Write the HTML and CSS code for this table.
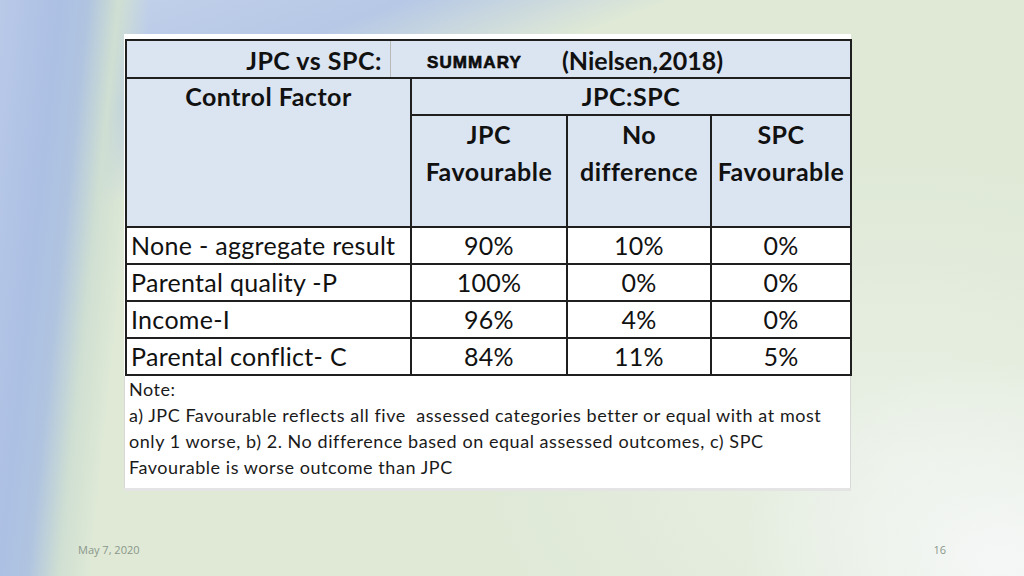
FILE: index.html
```html
<!DOCTYPE html>
<html>
<head>
<meta charset="utf-8">
<link rel="stylesheet" href="styles.css">
</head>
<body>
<div class="slide">
  <div class="sheet">
    <table class="grid">
      <colgroup>
        <col class="c1"><col class="c2"><col class="c3"><col class="c4">
      </colgroup>
      <tr class="r-title">
        <td colspan="4" class="hd title-cell">
          <div class="title">
            <span class="t-left">JPC vs SPC:</span>
            <span class="t-summary">SUMMARY</span>
            <span class="t-ref">(Nielsen,2018)</span>
          </div>
        </td>
      </tr>
      <tr class="r-h1">
        <td rowspan="2" class="hd top">Control Factor</td>
        <td colspan="3" class="hd">JPC:SPC</td>
      </tr>
      <tr class="r-h2">
        <td class="hd top two">JPC<br>Favourable</td>
        <td class="hd top two">No<br>difference</td>
        <td class="hd top two">SPC<br>Favourable</td>
      </tr>
      <tr class="r-d"><td class="lbl">None - aggregate result</td><td>90%</td><td>10%</td><td>0%</td></tr>
      <tr class="r-d"><td class="lbl">Parental quality -P</td><td>100%</td><td>0%</td><td>0%</td></tr>
      <tr class="r-d"><td class="lbl">Income-I</td><td>96%</td><td>4%</td><td>0%</td></tr>
      <tr class="r-d"><td class="lbl">Parental conflict- C</td><td>84%</td><td>11%</td><td>5%</td></tr>
    </table>
    <div class="note">
      <p>Note:</p>
      <p>a) JPC Favourable reflects all five&nbsp; assessed categories better or equal with at most</p>
      <p>only 1 worse, b) 2. No difference based on equal assessed outcomes, c) SPC</p>
      <p>Favourable is worse outcome than JPC</p>
    </div>
    <div class="sheet-foot"></div>
  </div>
  <div class="footer">
    <span>May 7, 2020</span>
    <span>16</span>
  </div>
</div>
</body>
</html>
```

FILE: styles.css
```css
html, body {
  margin: 0;
  padding: 0;
}
body {
  width: 1024px;
  height: 576px;
  overflow: hidden;
}
.slide {
  width: 1024px;
  height: 576px;
  box-sizing: border-box;
  padding-top: 34px;
  display: flex;
  flex-direction: column;
  background-color: #dfe9d6;
  background-image:
    radial-gradient(ellipse 260px 200px at 1000px 560px, rgba(246,248,248,0.95), rgba(246,248,248,0) 100%),
    radial-gradient(ellipse 420px 300px at 900px 460px, rgba(236,242,234,0.8), rgba(236,242,234,0) 100%),
    linear-gradient(96deg, #b9c9e8 0px, #acc0e4 60px, #b0c4e0 88px, #cfdfd2 118px, rgba(220,232,212,0) 150px),
    linear-gradient(160deg, #c6d4ec 0px, #b6c8e6 140px, rgba(190,206,232,0) 230px);
  font-family: "Lato", "Open Sans", sans-serif;
}
.sheet {
  margin-left: 124px;
  width: 727px;
  background: #ffffff;
  padding: 5px 1px 0 1px;
  box-sizing: border-box;
}
.grid {
  border-collapse: collapse;
  width: 725px;
  table-layout: fixed;
  color: #111;
}
.c1 { width: 285px; }
.c2 { width: 156px; }
.c3 { width: 144px; }
.c4 { width: 140px; }
.grid td {
  border: 2px solid #1f1f1f;
  padding: 0;
  text-align: center;
  font-size: 25px;
  letter-spacing: 0.3px;
  line-height: 35px;
  white-space: nowrap;
}
.grid td.hd {
  background: #dbe4f1;
  font-weight: 700;
  letter-spacing: 0.5px;
}
.grid td.top {
  vertical-align: top;
}
.r-title td { height: 36px; }
.r-h1 td { height: 35px; }
.r-h2 td { height: 110px; }
.r-d td { height: 35px; }
.grid td.two {
  line-height: 37px;
  padding-top: 0;
}
.grid td.lbl {
  text-align: left;
  padding-left: 4px;
}
.title-cell {
  padding: 0 !important;
}
.title {
  display: flex;
  align-items: stretch;
  height: 36px;
}
.t-left {
  width: 264px;
  box-sizing: border-box;
  text-align: right;
  padding-right: 8px;
  border-right: 1px solid #b9b9b9;
  line-height: 38px;
}
.t-summary {
  font-family: "Liberation Sans", Arial, sans-serif;
  font-weight: 700;
  font-size: 17px;
  letter-spacing: 1.1px;
  padding-left: 36px;
  width: 170px;
  text-align: left;
  box-sizing: border-box;
  line-height: 44px;
  -webkit-text-stroke: 0.6px #000;
}
.t-ref {
  line-height: 38px;
  letter-spacing: 0;
  margin-left: 1px;
}
.note {
  padding: 0 0 8px 4px;
  color: #1a1a1a;
  border-left: 1px solid #d8d8d8;
  border-right: 1px solid #d8d8d8;
  margin: 0 -1px;
}
.note p {
  margin: 0;
  font-size: 18px;
  letter-spacing: 0.55px;
  line-height: 26px;
  white-space: nowrap;
}
.sheet-foot {
  height: 3px;
  background: #e4e4e4;
  margin: 0 -1px;
}
.footer {
  margin-top: auto;
  display: flex;
  justify-content: space-between;
  padding: 0 78px 19px 78px;
  font-family: "Open Sans", sans-serif;
  font-size: 11px;
  color: #8a978a;
}
```
